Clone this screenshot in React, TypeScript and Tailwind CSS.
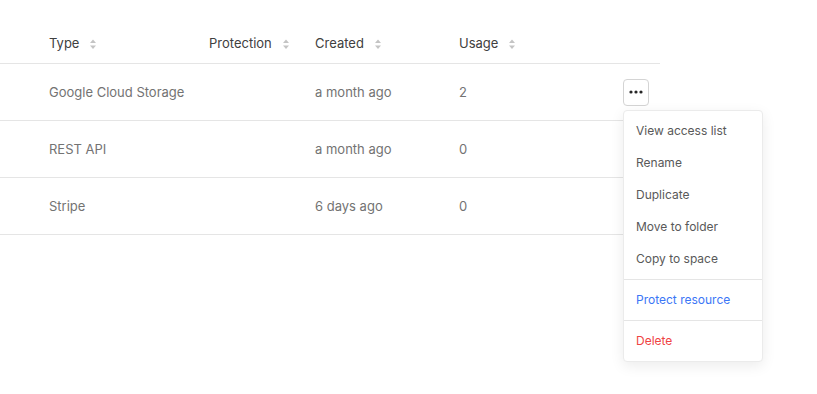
import { ReactNode } from "react";

type Row = {
  type: string;
  created: string;
  usage: number;
  active?: boolean;
};

const rows: Row[] = [
  { type: "Google Cloud Storage", created: "a month ago", usage: 2, active: true },
  { type: "REST API", created: "a month ago", usage: 0 },
  { type: "Stripe", created: "6 days ago", usage: 0 },
];

const cols = "grid grid-cols-[49px_160px_106px_144px_1fr_37px] items-center";

function SortIcon() {
  return (
    <svg width="8" height="11" viewBox="0 0 8 11" className="ml-[10px] text-[#c4c4c4]">
      <path d="M4 0.5 L7 4 L1 4 Z" fill="currentColor" />
      <path d="M1 6.5 L7 6.5 L4 10 Z" fill="currentColor" />
    </svg>
  );
}

function HeadCell({ children }: { children: ReactNode }) {
  return (
    <div className="flex items-center">
      <span>{children}</span>
      <SortIcon />
    </div>
  );
}

function MenuItem({ children, color = "text-[#595959]" }: { children: ReactNode; color?: string }) {
  return <div className={`h-8 flex items-center px-3 ${color}`}>{children}</div>;
}

export default function App() {
  return (
    <div
      className="relative w-[817px] h-[394px] bg-white text-[13px]"
      style={{ fontFamily: "Inter, 'Noto Sans', sans-serif" }}
    >
      <div className="w-[660px] pt-[23px]">
        <div className={`${cols} h-[41px] pt-[2px] border-b border-[#e5e5e5] text-[#404040]`}>
          <div />
          <HeadCell>Type</HeadCell>
          <HeadCell>Protection</HeadCell>
          <HeadCell>Created</HeadCell>
          <HeadCell>Usage</HeadCell>
          <div />
        </div>

        {rows.map((r) => (
          <div key={r.type} className={`${cols} h-[57px] border-b border-[#e5e5e5] text-[#737373]`}>
            <div />
            <div className="pt-[2px]">{r.type}</div>
            <div />
            <div className="pt-[2px]">{r.created}</div>
            <div className="pt-[2px]">{r.usage}</div>
            <div>
              {r.active && (
                <button className="w-[26px] h-[27px] rounded-[4px] border border-[#d4d4d4] flex items-center justify-center">
                  <svg width="14" height="4" viewBox="0 0 14 4">
                    <circle cx="2" cy="2" r="1.6" fill="#262626" />
                    <circle cx="7" cy="2" r="1.6" fill="#262626" />
                    <circle cx="12" cy="2" r="1.6" fill="#262626" />
                  </svg>
                </button>
              )}
            </div>
          </div>
        ))}
      </div>

      {/* row actions dropdown */}
      <div className="absolute left-[623px] top-[110px] w-[140px] py-1 text-[12px] bg-white border border-[#ebebeb] rounded-[4px] shadow-[0_4px_14px_rgba(0,0,0,0.08)]">
        <MenuItem>View access list</MenuItem>
        <MenuItem>Rename</MenuItem>
        <MenuItem>Duplicate</MenuItem>
        <MenuItem>Move to folder</MenuItem>
        <MenuItem>Copy to space</MenuItem>
        <div className="my-1 h-px bg-[#e5e5e5]" />
        <MenuItem color="text-[#3b76f6]">Protect resource</MenuItem>
        <div className="my-1 h-px bg-[#e5e5e5]" />
        <MenuItem color="text-[#ef4444]">Delete</MenuItem>
      </div>
    </div>
  );
}
